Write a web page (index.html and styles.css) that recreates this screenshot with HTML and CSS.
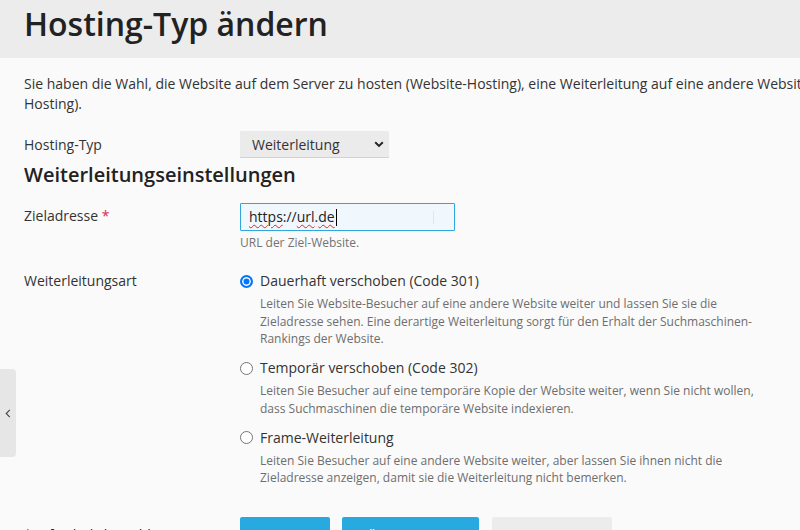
FILE: index.html
```html
<!DOCTYPE html>
<html lang="de">
<head>
<meta charset="utf-8">
<title>Hosting-Typ ändern</title>
<link rel="stylesheet" href="styles.css">
</head>
<body>
<header class="page-header">
  <h1 class="page-title">Hosting-Typ ändern</h1>
</header>
<main class="content">
  <p class="intro">Sie haben die Wahl, die Website auf dem Server zu hosten (Website-Hosting), eine Weiterleitung auf eine andere Website einzurichten oder die Website gar nicht zu hosten (Kein<br>Hosting).</p>

  <div class="row row-select">
    <div class="label">Hosting-Typ</div>
    <div class="field">
      <div class="select">
        <span>Weiterleitung</span>
        <svg class="chev" width="10" height="7" viewBox="0 0 10 7"><path d="M1.2 1.3 L5 5 L8.8 1.3" fill="none" stroke="#222" stroke-width="1.9"/></svg>
      </div>
    </div>
  </div>

  <h2 class="section-title">Weiterleitungseinstellungen</h2>

  <div class="row row-input">
    <div class="label">Zieladresse <span class="req">*</span></div>
    <div class="field">
      <div class="input"><span class="sp">https</span>://<span class="sp">url</span>.<span class="sp">de</span><span class="caret"></span><span class="ibeam"></span></div>
      <div class="hint">URL der Ziel-Website.</div>
    </div>
  </div>

  <div class="row row-radios">
    <div class="label">Weiterleitungsart</div>
    <div class="field">
      <div class="option">
        <div class="opt-line"><span class="radio checked"></span><span class="opt-label">Dauerhaft verschoben (Code 301)</span></div>
        <div class="desc">Leiten Sie Website-Besucher auf eine andere Website weiter und lassen Sie sie die Zieladresse sehen. Eine derartige Weiterleitung sorgt für den Erhalt der Suchmaschinen-Rankings der Website.</div>
      </div>
      <div class="option">
        <div class="opt-line"><span class="radio"></span><span class="opt-label">Temporär verschoben (Code 302)</span></div>
        <div class="desc">Leiten Sie Besucher auf eine temporäre Kopie der Website weiter, wenn Sie nicht wollen, dass Suchmaschinen die temporäre Website indexieren.</div>
      </div>
      <div class="option">
        <div class="opt-line"><span class="radio"></span><span class="opt-label">Frame-Weiterleitung</span></div>
        <div class="desc">Leiten Sie Besucher auf eine andere Website weiter, aber lassen Sie ihnen nicht die Zieladresse anzeigen, damit sie die Weiterleitung nicht bemerken.</div>
      </div>
    </div>
  </div>

  <div class="row row-footer">
    <div class="label"><span class="req">*</span> Erforderliche Felder</div>
    <div class="field buttons">
      <button class="btn btn-primary btn-ok">OK</button>
      <button class="btn btn-primary btn-apply">Übernehmen</button>
      <button class="btn btn-cancel">Abbrechen</button>
    </div>
  </div>
</main>
<div class="side-tab">
  <svg width="6" height="9" viewBox="0 0 6 9"><path d="M4.8 0.8 L1.2 4.5 L4.8 8.2" fill="none" stroke="#444" stroke-width="1.1"/></svg>
</div>
</body>
</html>
```
FILE: styles.css
```css
html, body {
  margin: 0;
  padding: 0;
  overflow: hidden;
  height: 530px;
}
body {
  background: #fafafa;
  font-family: "Open Sans", "Noto Sans", sans-serif;
  color: #333;
  font-size: 14px;
  line-height: 20px;
  position: relative;
}
.page-header {
  background: #ececec;
  height: 58px;
  padding: 0 24px;
  box-sizing: border-box;
}
.page-title {
  margin: 0;
  padding-top: 4px;
  font-size: 32px;
  line-height: 40px;
  font-weight: 600;
  color: #222;
  white-space: nowrap;
}
.content {
  padding: 16px 24px 0 24px;
  width: 1400px;
}
.intro {
  margin: 0 0 17px 0;
  width: 1250px;
}
.row {
  display: grid;
  grid-template-columns: 216px 1fr;
}
.label {
  color: #333;
}
.req {
  color: #d22f4a;
}
.row-select .label {
  padding-top: 4px;
}
.select {
  width: 149px;
  height: 27px;
  box-sizing: border-box;
  background: #ebebeb;
  box-shadow: inset 0 -1px 0 #d2d2d2;
  border-radius: 1px;
  display: flex;
  align-items: center;
  justify-content: space-between;
  padding: 0 5px 0 12px;
  color: #333;
}
.chev {
  display: block;
}
.section-title {
  margin: 5px 0 16px 0;
  font-size: 20px;
  line-height: 24px;
  font-weight: 600;
  color: #222;
}
.row-input .label {
  padding-top: 3px;
}
.input {
  width: 215px;
  height: 28px;
  box-sizing: border-box;
  border: 1px solid #2fa6dc;
  background: #f1f8fd;
  border-radius: 1px;
  padding: 0 8px;
  display: flex;
  align-items: center;
  color: #222;
  position: relative;
}
.sp {
  text-decoration: underline wavy #e0261b;
  text-decoration-thickness: 1px;
  text-underline-offset: 2px;
}
.caret {
  width: 1px;
  height: 17px;
  background: #000;
  margin-left: 1px;
}
.ibeam {
  position: absolute;
  right: 20px;
  top: 7px;
  width: 1px;
  height: 13px;
  background: #e4e4e4;
}
.hint {
  margin-top: 4px;
  font-size: 12px;
  line-height: 16px;
  color: #737373;
}
.row-radios {
  margin-top: 20px;
}
.option {
  margin-bottom: 10.5px;
}
.opt-line {
  display: flex;
  align-items: center;
  gap: 7px;
  color: #333;
}
.radio {
  width: 13px;
  height: 13px;
  box-sizing: border-box;
  border: 1px solid #767676;
  border-radius: 50%;
  background: #fff;
  flex: none;
}
.radio.checked {
  border: 2px solid #0075ff;
  box-shadow: inset 0 0 0 1.5px #fff;
  background: #0075ff;
}
.desc {
  margin: 4px 0 0 20px;
  width: 510px;
  font-size: 12px;
  line-height: 17.5px;
  color: #6e6e6e;
}
.row-footer {
  margin-top: 20px;
}
.row-footer .label {
  padding-top: 8px;
  color: #222;
}
.buttons {
  display: flex;
  gap: 12px;
}
.btn {
  border: none;
  height: 38px;
  border-radius: 2px;
  font-family: inherit;
  font-size: 14px;
  color: #fff;
  padding: 0;
}
.btn-primary {
  background: #28aae1;
}
.btn-ok {
  width: 90px;
}
.btn-apply {
  width: 137px;
  margin-right: 1px;
}
.btn-cancel {
  width: 120px;
  background: #ececec;
  color: #333;
}
.side-tab {
  position: absolute;
  left: 0;
  top: 369px;
  width: 16px;
  height: 88px;
  background: #e6e6e6;
  border-radius: 0 4px 4px 0;
  display: flex;
  align-items: center;
  justify-content: center;
  padding-right: 1px;
  box-sizing: border-box;
}
.side-tab svg {
  display: block;
}
```
